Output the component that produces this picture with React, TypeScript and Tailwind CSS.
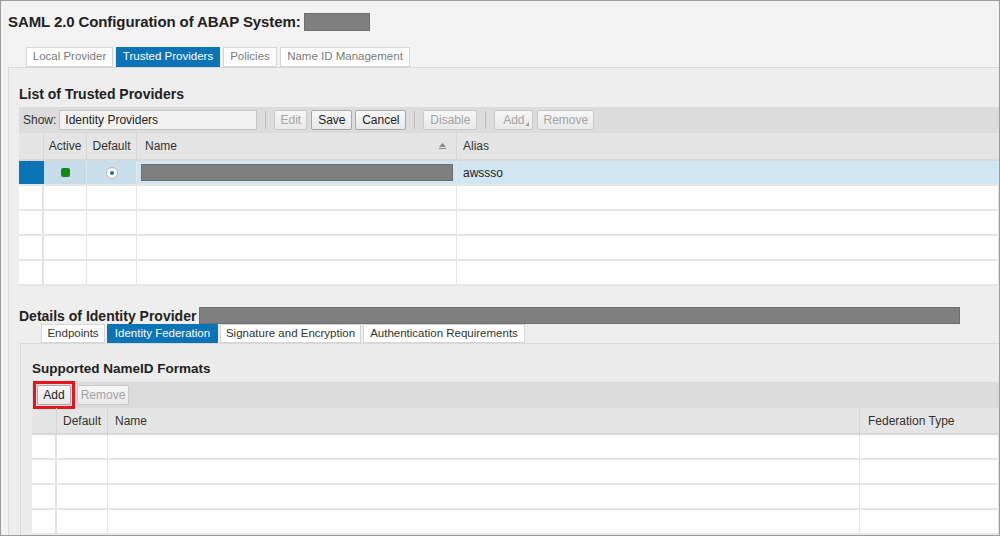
import React from 'react';

const Tab: React.FC<{ label: string; w: string; active?: boolean; dim?: boolean }> = ({ label, w, active, dim }) => (
  <div
    className={`${w} h-full flex items-center justify-center border text-[11.5px] ${
      active
        ? 'bg-[#0b74b7] border-[#0b74b7] text-white'
        : `bg-white border-[#d6d6d6] ${dim ? 'text-[#7a7a7a]' : 'text-[#333]'}`
    }`}
  >
    {label}
  </div>
);

const Btn: React.FC<{ label: string; w: string; disabled?: boolean; menu?: boolean }> = ({ label, w, disabled, menu }) => (
  <div
    className={`${w} relative h-[20px] flex items-center justify-center border rounded-[2px] text-[12px] bg-gradient-to-b from-[#f7f7f7] to-[#e9e9e9] ${
      disabled ? 'border-[#c9c9c9] text-[#a3a3a3]' : 'border-[#a9a9a9] text-[#222]'
    }`}
  >
    {label}
    {menu && (
      <svg className="absolute right-[3px] bottom-[3px]" width="4" height="4" viewBox="0 0 4 4">
        <path d="M4 0 L4 4 L0 4 Z" fill="#9a9a9a" />
      </svg>
    )}
  </div>
);

const Sep = () => <div className="w-px h-[18px] bg-[#bdbdbd] mx-[8px]" />;

const EmptyRow: React.FC<{ cols: string[] }> = ({ cols }) => (
  <div className="flex h-[25px] bg-white border-b-2 border-[#e6e6e6]">
    <div className={`${cols[0]} border-r-2 border-[#e2e2e2] bg-white`} />
    {cols.slice(1).map((c, i) => (
      <div key={i} className={`${c} border-r border-[#e4e4e4]`} />
    ))}
  </div>
);

export default function App() {
  const cols1 = ['w-[25px]', 'w-[43px]', 'w-[50px]', 'w-[320px]', 'flex-1'];
  const cols2 = ['w-[25px]', 'w-[51px]', 'w-[752px]', 'flex-1'];

  return (
    <div className="w-[1000px] h-[536px] overflow-hidden border border-[#9c9c9c] bg-[#f3f3f3] font-['Liberation_Sans',Arial,sans-serif] text-[#333]">
      {/* title */}
      <div className="h-[46px] flex items-start pl-[7px] pt-[12px] gap-[3px]">
        <h1 className="text-[15px] leading-[18px] font-bold text-[#222] tracking-[-0.1px]">SAML 2.0 Configuration of ABAP System:</h1>
        <div className="w-[66px] h-[18px] bg-[#7f7f7f] border border-[#6f6f6f]" />
      </div>

      {/* top tabs */}
      <div className="flex h-[20px] pl-[25px] gap-[3px]">
        <Tab label="Local Provider" w="w-[87px]" dim />
        <Tab label="Trusted Providers" w="w-[104px]" active />
        <Tab label="Policies" w="w-[54px]" dim />
        <Tab label="Name ID Management" w="w-[130px]" dim />
      </div>

      {/* main panel */}
      <div className="ml-[7px] h-[500px] bg-[#eeeeee] border-l border-t border-[#d9d9d9] pl-[10px]">
        <h2 className="pt-[18px] text-[14px] leading-[16px] font-bold text-[#222]">List of Trusted Providers</h2>

        {/* toolbar */}
        <div className="mt-[5px] h-[26px] bg-[#dcdcdc] flex items-center pl-[4px]">
          <span className="text-[12px] text-[#333]">Show:</span>
          <div className="ml-[3px] w-[198px] h-[20px] bg-[#f2f2f2] border border-[#c4c4c4] text-[12px] flex items-center pl-[5px] text-[#222]">
            Identity Providers
          </div>
          <Sep />
          <Btn label="Edit" w="w-[33px]" disabled />
          <div className="w-[4px]" />
          <Btn label="Save" w="w-[41px]" />
          <div className="w-[3px]" />
          <Btn label="Cancel" w="w-[51px]" />
          <Sep />
          <Btn label="Disable" w="w-[54px]" disabled />
          <Sep />
          <Btn label="Add" w="w-[39px]" disabled menu />
          <div className="w-[4px]" />
          <Btn label="Remove" w="w-[57px]" disabled />
        </div>

        {/* table 1 */}
        <div className="text-[12px]">
          <div className="flex h-[28px] bg-[#e5e5e5] border-b-2 border-[#d8d8d8]">
            <div className={`${cols1[0]} border-r border-[#d6d6d6]`} />
            <div className={`${cols1[1]} border-r border-[#d6d6d6] flex items-center justify-center`}>Active</div>
            <div className={`${cols1[2]} border-r border-[#d6d6d6] flex items-center justify-center`}>Default</div>
            <div className={`${cols1[3]} border-r border-[#d6d6d6] flex items-center pl-[8px] pr-[10px] justify-between`}>
              <span>Name</span>
              <svg width="7" height="6" viewBox="0 0 7 6">
                <path d="M3.5 0 L7 4 L0 4 Z" fill="#8a8a8a" />
                <rect x="0" y="5" width="7" height="1" fill="#8a8a8a" />
              </svg>
            </div>
            <div className={`${cols1[4]} flex items-center pl-[6px]`}>Alias</div>
          </div>
          {/* selected row */}
          <div className="flex h-[25px] bg-[#d0e6f3] border-b-2 border-[#e6e6e6]">
            <div className={`${cols1[0]} bg-[#0b74b7]`} />
            <div className={`${cols1[1]} bg-[#c6dcea] border-r border-[#dde8ef] flex items-center justify-center`}>
              <div className="w-[9px] h-[9px] rounded-[2px] bg-[#128a12]" />
            </div>
            <div className={`${cols1[2]} bg-[#c9dfec] border-r border-[#dde8ef] flex items-center justify-center`}>
              <div className="w-[12px] h-[12px] rounded-full bg-white border border-[#b8b8b8] flex items-center justify-center">
                <div className="w-[4px] h-[4px] rounded-full bg-[#0b74b7]" />
              </div>
            </div>
            <div className={`${cols1[3]} border-r border-[#dde8ef] flex items-center pl-[4px] pr-[3px]`}>
              <div className="w-full h-[17px] bg-[#7f7f7f] border border-[#6e6e6e]" />
            </div>
            <div className={`${cols1[4]} flex items-center pl-[6px] text-[#222]`}>awssso</div>
          </div>
          <EmptyRow cols={cols1} />
          <EmptyRow cols={cols1} />
          <EmptyRow cols={cols1} />
          <EmptyRow cols={cols1} />
        </div>

        {/* details */}
        <div className="mt-[21px] flex items-center h-[17px]">
          <h2 className="text-[14px] leading-[16px] font-bold text-[#222]">Details of Identity Provider</h2>
          <div className="ml-[3px] w-[761px] h-[17px] bg-[#7f7f7f] border border-[#6e6e6e]" />
        </div>

        <div className="flex h-[19px] pl-[22px] gap-[2px]">
          <Tab label="Endpoints" w="w-[64px]" />
          <Tab label="Identity Federation" w="w-[111px]" active />
          <Tab label="Signature and Encryption" w="w-[141px]" />
          <Tab label="Authentication Requirements" w="w-[162px]" />
        </div>

        {/* sub panel */}
        <div className="ml-px h-[200px] bg-[#ececec] border-l border-t border-[#d9d9d9] pl-[11px]">
          <h3 className="pt-[17px] text-[13.5px] leading-[16px] font-bold text-[#222]">Supported NameID Formats</h3>
          <div className="mt-[5px] h-[26px] bg-[#dcdcdc] flex items-center pl-px">
            <div className="border-[3px] border-[#e8141b] p-px">
              <Btn label="Add" w="w-[34px]" />
            </div>
            <div className="w-[2px]" />
            <Btn label="Remove" w="w-[52px]" disabled />
          </div>

          <div className="text-[12px]">
            <div className="flex h-[27px] bg-[#e5e5e5] border-b-2 border-[#d8d8d8]">
              <div className={`${cols2[0]} border-r border-[#d6d6d6]`} />
              <div className={`${cols2[1]} border-r border-[#d6d6d6] flex items-center justify-center`}>Default</div>
              <div className={`${cols2[2]} border-r border-[#d6d6d6] flex items-center pl-[7px]`}>Name</div>
              <div className={`${cols2[3]} flex items-center pl-[8px]`}>Federation Type</div>
            </div>
            <EmptyRow cols={cols2} />
            <EmptyRow cols={cols2} />
            <EmptyRow cols={cols2} />
            <EmptyRow cols={cols2} />
          </div>
        </div>
      </div>
    </div>
  );
}
